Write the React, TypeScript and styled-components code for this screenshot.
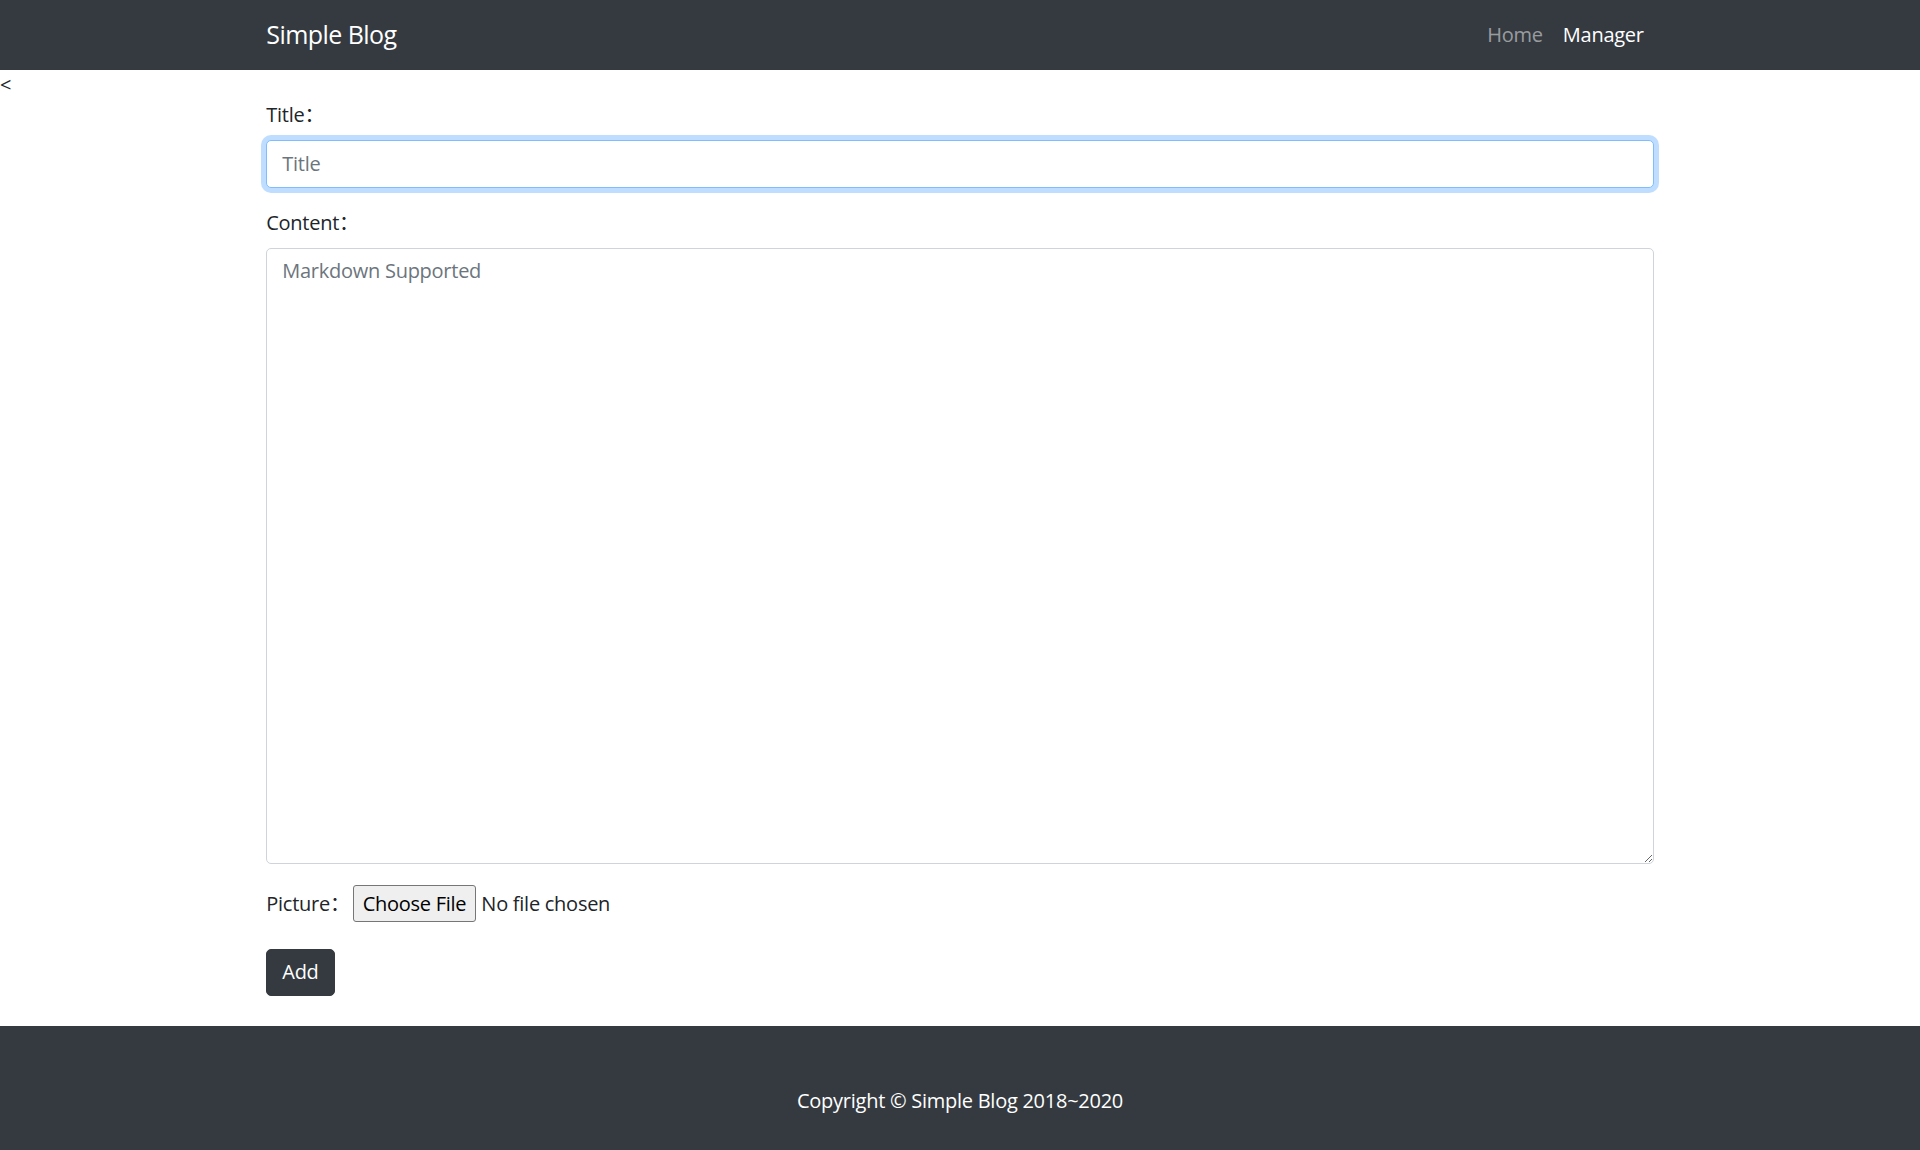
import React from 'react';
import styled, { createGlobalStyle, css } from 'styled-components';

const GlobalStyle = createGlobalStyle`
  * { box-sizing: border-box; }
  body {
    margin: 0;
    font-family: 'Open Sans', 'Noto Sans CJK SC', sans-serif;
    font-size: 20px;
    line-height: 1.5;
    letter-spacing: -0.26px;
    color: #212529;
    background: #fff;
  }
`;

/* navbar */
const NavBar = styled.nav`
  background: #343a40;
  padding: 10px 0;
`;

const Container = styled.div`
  max-width: 1425px;
  margin: 0 auto;
  padding: 0 18.75px;
`;

const NavInner = styled(Container)`
  display: flex;
  align-items: center;
  justify-content: space-between;
`;

const Brand = styled.a`
  color: #fff;
  font-size: 25px;
  line-height: 37.5px;
  letter-spacing: -0.55px;
  padding: 6.25px 0;
  text-decoration: none;
`;

const NavLinks = styled.div`
  display: flex;
`;

const NavLink = styled.a<{ active?: boolean }>`
  padding: 10px;
  line-height: 30px;
  text-decoration: none;
  color: ${(p) => (p.active ? '#fff' : 'rgba(255, 255, 255, 0.5)')};
`;

// 이전 페이지에서 남은 문자
const Stray = styled.div`
  line-height: 30px;
`;

/* form */
const Form = styled.form`
  padding-bottom: 30px;
`;

const Group = styled.div`
  margin-bottom: 20px;
`;

const Label = styled.label`
  display: block;
  margin-bottom: 10px;
  line-height: 30px;
`;

const fieldStyle = css`
  display: block;
  width: 100%;
  font-family: inherit;
  font-size: 20px;
  letter-spacing: inherit;
  line-height: 30px;
  color: #495057;
  background: #fff;
  border: 1.25px solid #ced4da;
  border-radius: 5px;
  padding: 7.5px 15px;
  outline: none;
  &::placeholder {
    color: #6c757d;
  }
`;

const TextInput = styled.input<{ focused?: boolean }>`
  ${fieldStyle}
  height: 47.5px;
  ${(p) =>
    p.focused &&
    css`
      border-color: #80bdff;
      box-shadow: 0 0 0 5px rgba(0, 123, 255, 0.25);
    `}
`;

const TextArea = styled.textarea`
  ${fieldStyle}
  height: 616px;
`;

const InlineRow = styled.div`
  display: flex;
  align-items: center;
  height: 40px;
  margin-bottom: 25px;
`;

const InlineLabel = styled.label`
  line-height: 30px;
  margin-right: 3px;
`;

const FileInput = styled.input`
  font-family: inherit;
  font-size: 20px;
  letter-spacing: inherit;
  color: #212529;
  &::file-selector-button {
    font-family: inherit;
    font-size: 20px;
    letter-spacing: inherit;
    line-height: 27px;
    color: #000;
    background: #efefef;
    border: 1.25px solid #767676;
    border-radius: 3px;
    padding: 4px 9px;
    margin-right: 5px;
  }
`;

const Button = styled.button`
  font-family: inherit;
  font-size: 20px;
  letter-spacing: inherit;
  line-height: 30px;
  color: #fff;
  background: #343a40;
  border: 1.25px solid #343a40;
  border-radius: 5px;
  padding: 7.5px 15px;
`;

/* footer */
const Footer = styled.footer`
  background: #343a40;
  color: #fff;
  text-align: center;
  padding: 60px 0;
  line-height: 30px;
`;

export default function App() {
  return (
    <>
      <GlobalStyle />
      <NavBar>
        <NavInner>
          <Brand href="#">Simple Blog</Brand>
          <NavLinks>
            <NavLink href="#">Home</NavLink>
            <NavLink href="#" active>
              Manager
            </NavLink>
          </NavLinks>
        </NavInner>
      </NavBar>
      <Stray>&lt;</Stray>
      <Container>
        <Form onSubmit={(e) => e.preventDefault()}>
          <Group>
            <Label htmlFor="title">Title：</Label>
            <TextInput id="title" type="text" placeholder="Title" focused />
          </Group>
          <Group>
            <Label htmlFor="content">Content：</Label>
            <TextArea id="content" placeholder="Markdown Supported" />
          </Group>
          <InlineRow>
            <InlineLabel htmlFor="picture">Picture：</InlineLabel>
            <FileInput id="picture" type="file" />
          </InlineRow>
          <Button type="submit">Add</Button>
        </Form>
      </Container>
      <Footer>Copyright © Simple Blog 2018~2020</Footer>
    </>
  );
}
